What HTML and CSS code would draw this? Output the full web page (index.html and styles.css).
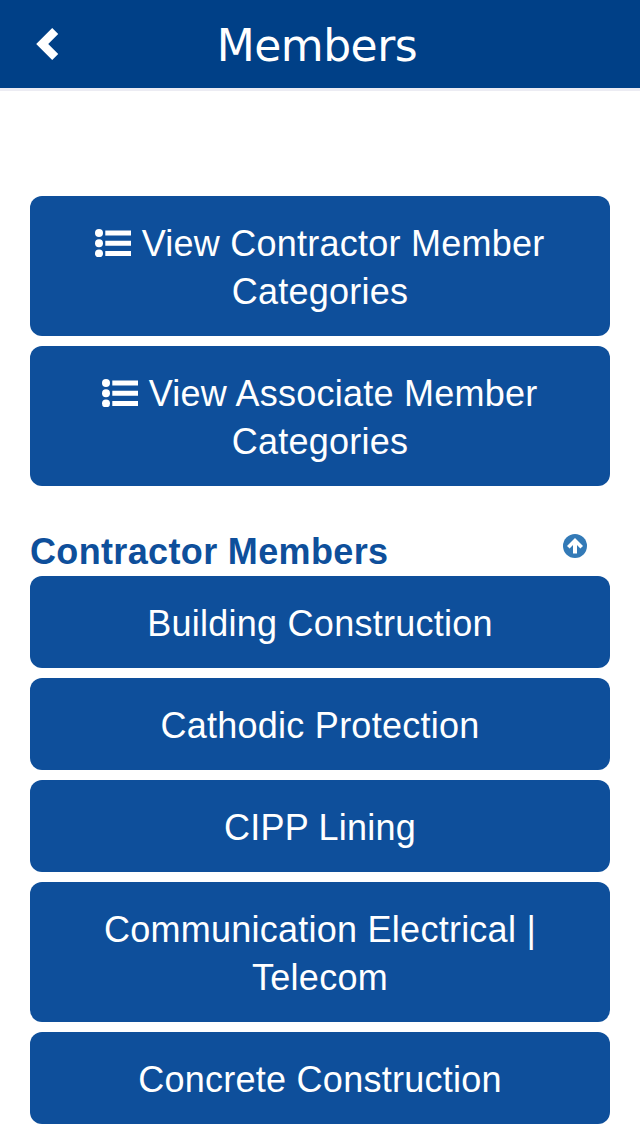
FILE: index.html
```html
<!DOCTYPE html>
<html lang="en">
  <head>
    <meta charset="utf-8">
    <title>Members</title>
    <link rel="stylesheet" href="styles.css">
  </head>
  <body>
    <header class="navbar">
      <a class="back" href="#" aria-label="Back">
        <svg width="24" height="34" viewBox="0 0 24 34"><path d="M16.2 1 22.2 7 12.2 17 22.2 27 16.2 33 .2 17z" fill="#fff"/></svg>
      </a>
      <h1 class="title">Members</h1>
    </header>

    <main class="content">
      <nav class="list">
        <a class="btn" href="#contractor"><svg class="icon-list" viewBox="0 0 36 28"><circle cx="4" cy="4" r="4"/><circle cx="4" cy="14.2" r="4"/><circle cx="4" cy="24.4" r="4"/><path d="M10.3 1.4H36v5H10.3zM10.3 11.7H36v5H10.3zM10.3 22H36v5H10.3z"/></svg> View Contractor Member Categories</a>
        <a class="btn" href="#associate"><svg class="icon-list" viewBox="0 0 36 28"><circle cx="4" cy="4" r="4"/><circle cx="4" cy="14.2" r="4"/><circle cx="4" cy="24.4" r="4"/><path d="M10.3 1.4H36v5H10.3zM10.3 11.7H36v5H10.3zM10.3 22H36v5H10.3z"/></svg> View Associate Member Categories</a>
      </nav>

      <div class="section-head" id="contractor">
        <h2 class="heading">Contractor Members</h2>
        <a class="to-top" href="#" aria-label="Top">
          <svg width="24" height="24" viewBox="0 0 24 24"><circle cx="12" cy="12" r="12" fill="#337ab7"/><path d="M12 4 20 12 17.4 14.4 14 11V19.6H10V11L6.6 14.4 4 12z" fill="#fff"/></svg>
        </a>
      </div>
      <div class="list">
        <a class="btn" href="#">Building Construction</a>
        <a class="btn" href="#">Cathodic Protection</a>
        <a class="btn" href="#">CIPP Lining</a>
        <a class="btn" href="#">Communication Electrical | Telecom</a>
        <a class="btn" href="#">Concrete Construction</a>
      </div>
    </main>
  </body>
</html>
```

FILE: styles.css
```css
html, body {
  margin: 0;
  padding: 0;
  background: #fff;
  font-family: "Liberation Sans", Arial, sans-serif;
  font-size: 36px;
  line-height: 48px;
}
* {
  box-sizing: border-box;
}
a {
  text-decoration: none;
}
svg {
  display: block;
}

.navbar {
  display: flex;
  align-items: center;
  height: 91px;
  padding: 0 36px;
  background: #004087;
  border-bottom: 3px solid #ececf3;
}
.back {
  width: 24px;
}
.title {
  flex: 1;
  margin: 0 30px 0 0;
  padding-top: 3px;
  color: #fff;
  font-family: "DejaVu Sans", Verdana, sans-serif;
  font-size: 44px;
  font-weight: 400;
  letter-spacing: -0.5px;
  text-align: center;
}

.content {
  padding: 105px 30px 0;
}
.list {
  display: flex;
  flex-direction: column;
  gap: 10px;
}
.btn {
  padding: 24px 34px 20px;
  border-radius: 12px;
  background: #0e4f9b;
  color: #fff;
  letter-spacing: 0.25px;
  text-align: center;
}
.icon-list {
  display: inline-block;
  width: 36px;
  height: 28px;
  fill: #fff;
  vertical-align: -1px;
}

.section-head {
  display: flex;
  justify-content: space-between;
  padding: 42px 23px 0 0;
}
.heading {
  margin: 0;
  color: #0e4f9b;
  font-size: 36px;
  font-weight: 700;
  letter-spacing: 0.35px;
}
.to-top {
  padding-top: 6px;
}
```
